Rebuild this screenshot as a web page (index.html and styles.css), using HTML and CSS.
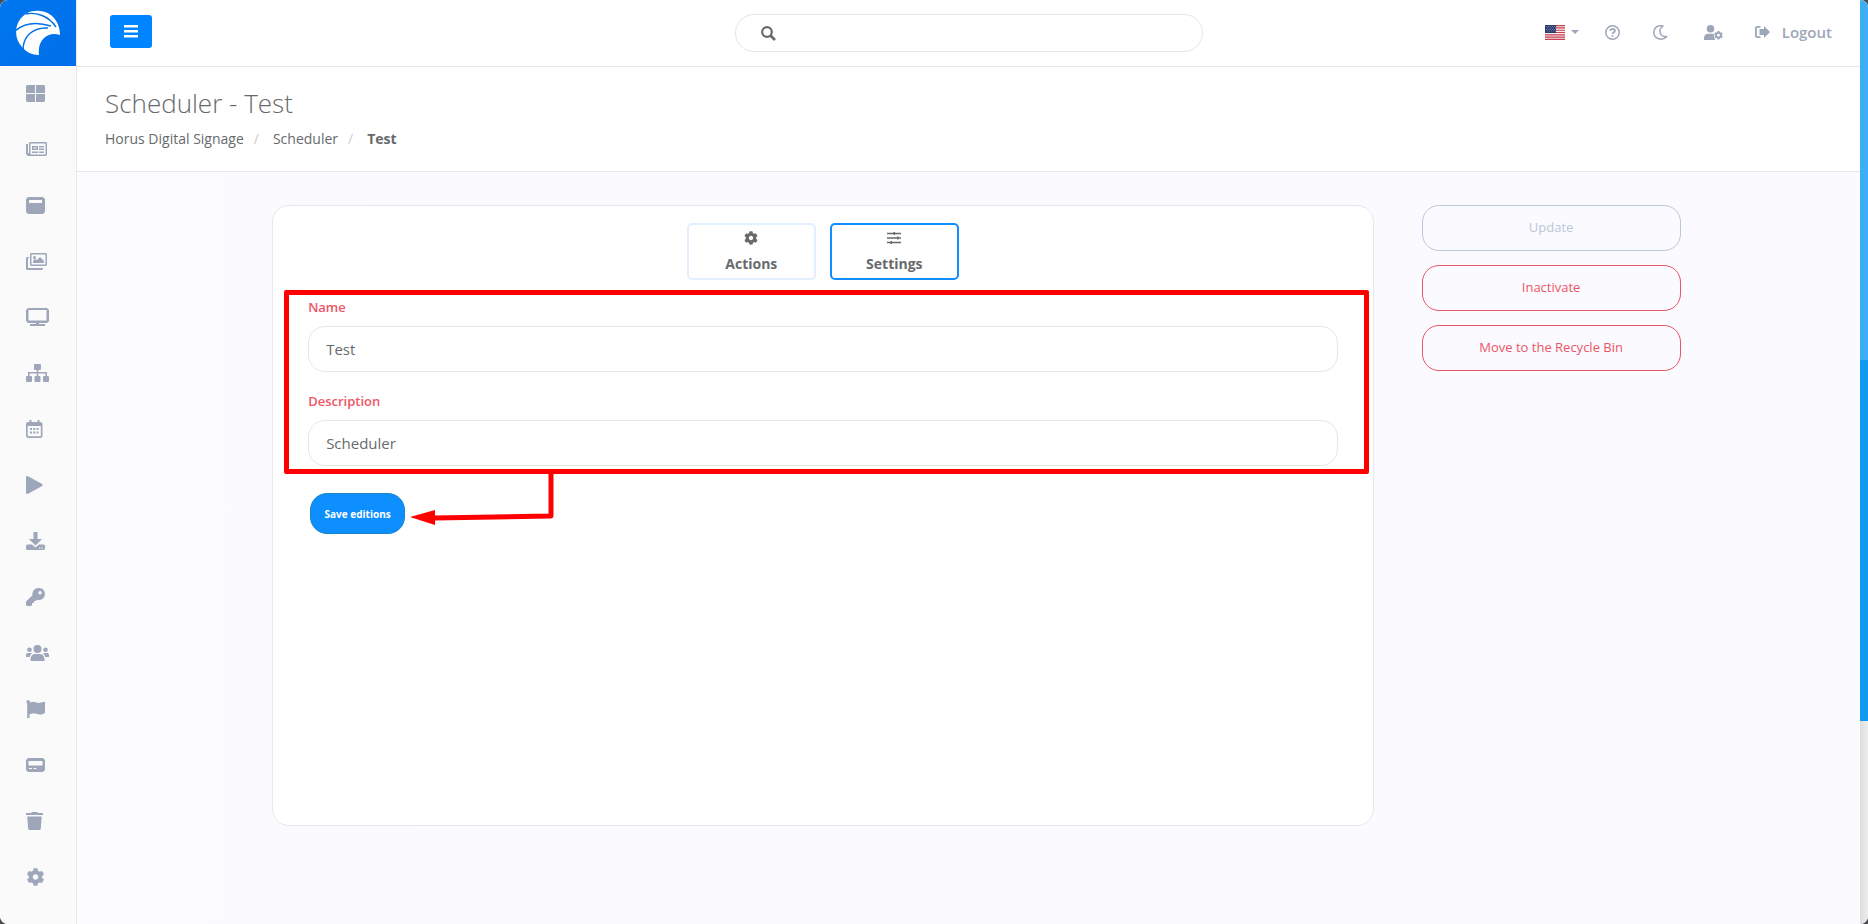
FILE: index.html
```html
<!DOCTYPE html>
<html lang="en">
<head>
  <meta charset="UTF-8">
  <meta name="viewport" content="width=device-width, initial-scale=1.0">
  <title>Scheduler - Test</title>
  <link rel="stylesheet" href="styles.css">
</head>
<body>
  <div class="app">
    <aside class="sidebar">
      <a class="logo" href="#" aria-label="Horus Digital Signage">
        <svg width="46" height="46" viewBox="0 0 46 46">
          <path fill="#fff" d="M24 45C17 45 11 42 7 37 0 29-.500 19 4 11 9 3 17 0 25 1c12 1 20 11 20 24-12-4-23 5-21 20z"/>
          <path fill="none" stroke="#0071ea" stroke-width="1.400" d="M11 4c9-2 22 1 30 13M0 21c8-7 20-10 36-5M8 40C8 27 17 17 33 18"/>
        </svg>
      </a>
      <nav class="side-menu">
        <a href="#" aria-label="Dashboard"><svg width="19" height="17" viewBox="0 0 19 17"><path d="M1 0h8v8H0V1zM10 0h8l1 1v7h-9zM0 9h9v8H1l-1-1zM10 9h9v7l-1 1h-8z"/></svg></a>
        <a href="#" aria-label="News"><svg width="21" height="14" viewBox="0 0 21 14"><path fill-rule="evenodd" d="M4 0h16l1 1v12l-1 1H2l-2-2V2h2v9h1V1zM4.500 1.500v11h15v-11zM6 4h6v4H6zm1.500 1.500v1h3v-1zM13 4h5v1.500h-5zM13 6.500h5V8h-5zM6 9.500h6V11H6zM13 9.500h5V11h-5z"/></svg></a>
        <a href="#" aria-label="Layouts"><svg width="19" height="17" viewBox="0 0 19 17"><path fill-rule="evenodd" d="M2 0h15l2 2v13l-2 2H2l-2-2V2zM3 3v3h13V3z"/></svg></a>
        <a href="#" aria-label="Media"><svg width="21" height="17" viewBox="0 0 21 17"><path fill-rule="evenodd" d="M5 0h15l1 1v11l-1 1H5l-1-1V1zM5.500 1.500v10h14v-10zM0 5l1-1h2v1H2v10h15v1l-1 1H1l-1-1zM7 10V8l2-2 2 1 3-3 4 4v2z"/><circle cx="8.500" cy="4.500" r="1.500"/></svg></a>
        <a href="#" aria-label="Screens"><svg width="23" height="18" viewBox="0 0 23 18"><path fill-rule="evenodd" d="M2 0h19l2 2v11l-2 2h-8v1h6v2H4v-2h6v-1H2l-2-2V2zM2.500 2v10.500h18V2z"/></svg></a>
        <a href="#" aria-label="Groups"><svg width="23" height="18" viewBox="0 0 23 18"><rect x="8" width="7" height="6" rx="1"/><rect y="12" width="6" height="6" rx="1"/><rect x="8.500" y="12" width="6" height="6" rx="1"/><rect x="17" y="12" width="6" height="6" rx="1"/><path d="M10.700 6h1.600v2H21v4h-1.600V9.600h-7.100V12h-1.600V9.600H3.600V12H2V8h8.700z"/></svg></a>
        <a href="#" aria-label="Scheduler"><svg width="17" height="18" viewBox="0 0 17 18"><path fill-rule="evenodd" d="M3.500 0h2v2h6V0h2v2H15l1.500 1.500v13L15 18H1.500L0 16.500v-13L1.500 2h2zM1.700 6v10.300h13.100V6zM4 8h2v2H4zm3.200 0h2v2h-2zm3.300 0h2v2h-2zM4 11.500h2v2H4zm3.200 0h2v2h-2zm3.300 0h2v2h-2z"/></svg></a>
        <a href="#" aria-label="Playback"><svg width="17" height="18" viewBox="0 0 17 18"><path d="M0 1.500C0 .2 1-.3 2 .3l13.800 7.500c1 .6 1 1.800 0 2.400L2 17.700c-1 .6-2 .1-2-1.200z"/></svg></a>
        <a href="#" aria-label="Downloads"><svg width="19" height="18" viewBox="0 0 19 18"><path fill-rule="evenodd" d="M7.500 0h4v7H16l-6.500 6.500L3 7h4.500zM1 12.500h5l3.500 3 3.500-3h5l1 1V17l-1 1H1l-1-1v-3.500zM13 15.500v1h1.300v-1zm2.500 0v1h1.300v-1z"/></svg></a>
        <a href="#" aria-label="Licenses"><svg width="19" height="18" viewBox="0 0 19 18"><path fill-rule="evenodd" d="M12.500 0A6 6 0 0 1 19 6a6 6 0 0 1-8 5.700L9.500 13H8v2H6v2l-1 1H1l-1-1v-3.500l6.500-6.300A6 6 0 0 1 12.500 0zM14 3a1.700 1.700 0 1 0 .1 0z"/></svg></a>
        <a href="#" aria-label="Users"><svg width="23" height="16" viewBox="0 0 23 16"><circle cx="11.500" cy="4" r="4"/><circle cx="3.500" cy="4.800" r="2.300"/><circle cx="19.500" cy="4.800" r="2.300"/><path d="M4.500 16v-2c0-3 2-5 4.500-5h5c2.500 0 4.500 2 4.500 5v2zM0 12v-2c0-1.200 1-2 2-2h3l1 .6C4.500 9.500 4 11 3.800 12zM23 12v-2c0-1.200-1-2-2-2h-3l-1 .6c1.500.9 2 2.400 2.200 3.400z"/></svg></a>
        <a href="#" aria-label="Reports"><svg width="19" height="18" viewBox="0 0 19 18"><path d="M2 0a2 2 0 0 1 1.800 2.500c4-2 6.500 1 10 .3 1.700-.2 3-.9 4-1.100.7-.1 1.200.3 1.200 1v10c-5 4-9 0-12.500.7-1 .1-2 .5-2.900.8V18H1.200V3.600A2 2 0 0 1 2 0z"/></svg></a>
        <a href="#" aria-label="Devices"><svg width="19" height="14" viewBox="0 0 19 14"><path fill-rule="evenodd" d="M2 0h15l2 2v10l-2 2H2l-2-2V2zM2.500 3v4.500h14V3zM3 10v1h3v-1zm4.500 0v1h3v-1z"/></svg></a>
        <a href="#" aria-label="Recycle bin"><svg width="17" height="18" viewBox="0 0 17 18"><path d="M0 1h5l1-1h5l1 1h5v2H0zM1.200 4.500h14.500L14.800 17l-1 1H3.200l-1-1z"/></svg></a>
        <a href="#" aria-label="Settings"><svg width="19" height="18" viewBox="0 0 512 512"><use href="#gear"/></svg></a>
      </nav>
    </aside>

    <div class="page">
      <header class="topbar">
        <button class="menu-toggle" type="button" aria-label="Toggle menu">
          <svg width="14" height="13" viewBox="0 0 14 13"><path fill="#fff" d="M0 0h14v2.500H0zM0 5h14v2.500H0zM0 10h14v2.500H0z"/></svg>
        </button>
        <label class="search">
          <svg width="15" height="15" viewBox="0 0 15 15"><circle cx="6" cy="6" r="4.800" fill="none" stroke="#676a6c" stroke-width="2.200"/><path d="M9.500 9.500l4.500 4.500" stroke="#676a6c" stroke-width="2.600"/></svg>
          <input type="search" aria-label="Search">
        </label>
        <nav class="top-links">
          <a class="language" href="#" aria-label="Language">
            <svg width="20" height="15" viewBox="0 0 20 15"><path fill="#f3e9ec" d="M0 0h20v15H0z"/><path stroke="#c8414f" stroke-width="1.150" d="M0 .6h20M0 2.900h20M0 5.200h20M0 7.500h20M0 9.800h20M0 12.100h20M0 14.400h20"/><path fill="#2b3c70" d="M0 0h11v8H0z"/><path stroke="#7f8bad" stroke-width=".8" stroke-dasharray="1 1" d="M1 1.500h10M2 3h9M1 4.500h10M2 6h9"/></svg>
            <svg width="8" height="4" viewBox="0 0 8 4"><path d="M0 0h8L4 4z"/></svg>
          </a>
          <a class="help" href="#" aria-label="Help"><svg width="15" height="15" viewBox="0 0 15 15"><g fill="none" stroke="#9ea6b9" stroke-width="1.500"><circle cx="7.500" cy="7.500" r="6.700"/><path stroke-width="1.800" d="M5.300 6c0-3 4.600-2.700 4.600-.2 0 1.600-2.300 1.500-2.300 3.200"/></g><circle cx="7.500" cy="10.900" r="1"/></svg></a>
          <a class="theme" href="#" aria-label="Dark mode"><svg width="15" height="15" viewBox="0 0 15 15"><path fill="none" stroke="#9ea6b9" stroke-width="1.500" stroke-linejoin="round" d="M10 1C3.500-.5.700 4 .8 7.500c.2 6.500 8.700 9 13 4C7 12.500 4.500 5 10 1z"/></svg></a>
          <a class="account" href="#" aria-label="Account"><svg width="19" height="15" viewBox="0 0 19 15"><circle cx="6.500" cy="3.800" r="3.800"/><path d="M0 15v-2c0-2.600 1.800-4.200 4-4.200h5l1.200.3-.4 3 1.500 2.900z"/><svg x="10" y="5.500" width="9" height="9.500" viewBox="0 0 512 512"><use href="#gear"/></svg></svg></a>
          <a class="logout" href="#"><svg width="15" height="12" viewBox="0 0 15 12"><path d="M5.500 0v1.800H2.600c-.5 0-.8.300-.8.800v6.800c0 .5.300.8.800.8h2.900V12H2.200C.8 12 0 11 0 9.800V2.200C0 1 .8 0 2.200 0zM9 0l6 6-6 6V9H4.500V3H9z"/></svg>Logout</a>
        </nav>
      </header>

      <section class="heading">
        <h1>Scheduler - Test</h1>
        <ol class="breadcrumb">
          <li><a href="#">Horus Digital Signage</a></li>
          <li><a href="#">Scheduler</a></li>
          <li><strong>Test</strong></li>
        </ol>
      </section>

      <main class="content">
        <section class="card">
          <div class="tabs">
            <button class="tab" type="button"><svg width="16" height="14" viewBox="0 0 512 512"><use href="#gear"/></svg>Actions</button>
            <button class="tab active" type="button"><svg width="14" height="14" viewBox="0 0 14 14"><path d="M0 1.800h14v1.400H0zM0 6.300h14v1.400H0zM0 10.800h14v1.400H0zM6.500 1H8v3H6.500zM10 5.500h1.500v3H10zM3.500 10H5v3H3.500z"/></svg>Settings</button>
          </div>
          <form class="edit-form">
            <div class="field">
              <label for="name">Name</label>
              <input id="name" type="text" value="Test">
            </div>
            <div class="field">
              <label for="description">Description</label>
              <input id="description" type="text" value="Scheduler">
            </div>
            <div class="marker"></div>
            <button class="save" type="button">Save editions</button>
            <svg class="marker-arrow" width="144" height="52" viewBox="0 0 144 52"><path fill="none" stroke="#f00" stroke-width="5" stroke-linejoin="round" d="M141 0v43L24 45"/><path fill="#f00" d="M0 44l25-7v15z"/></svg>
          </form>
        </section>
        <div class="actions">
          <button class="muted" type="button">Update</button>
          <button type="button">Inactivate</button>
          <button type="button">Move to the Recycle Bin</button>
        </div>
      </main>
    </div>
    <div class="scroll-track"><div class="scroll-upper"></div><div class="scroll-lower"></div></div>
  </div>

  <svg class="defs" width="0" height="0">
    <symbol id="gear" viewBox="0 0 512 512"><path d="M487.400 315.700l-42.600-24.600c4.300-23.200 4.300-47 0-70.200l42.600-24.600c4.900-2.800 7.100-8.600 5.500-14-11.100-35.600-30-67.800-54.700-94.600-3.800-4.100-10-5.100-14.800-2.300L380.800 110c-17.900-15.400-38.500-27.300-60.800-35.100V25.800c0-5.600-3.900-10.500-9.400-11.700-36.700-8.200-74.300-7.800-109.200 0-5.500 1.200-9.400 6.100-9.400 11.700V75c-22.200 7.900-42.800 19.800-60.800 35.100L88.700 85.500c-4.900-2.800-11-1.900-14.800 2.300-24.700 26.700-43.600 58.900-54.700 94.600-1.700 5.400.6 11.200 5.500 14L67.300 221c-4.300 23.200-4.300 47 0 70.200l-42.600 24.600c-4.900 2.800-7.100 8.600-5.500 14 11.100 35.600 30 67.800 54.700 94.600 3.800 4.100 10 5.100 14.800 2.300l42.600-24.600c17.900 15.400 38.500 27.300 60.800 35.100v49.200c0 5.600 3.900 10.500 9.400 11.700 36.700 8.200 74.300 7.800 109.200 0 5.500-1.200 9.400-6.100 9.400-11.700v-49.200c22.200-7.900 42.800-19.800 60.800-35.100l42.600 24.600c4.900 2.800 11 1.900 14.800-2.300 24.700-26.700 43.600-58.900 54.700-94.600 1.500-5.500-.7-11.300-5.600-14.100zM256 336c-44.100 0-80-35.900-80-80s35.900-80 80-80 80 35.900 80 80-35.900 80-80 80z"/></symbol>
  </svg>
</body>
</html>
```
FILE: styles.css
```css
* {
  box-sizing: border-box;
}

body {
  margin: 0;
  background: #4a4a4f;
  color: #676a6c;
  font-family: "Open Sans", "Liberation Sans", sans-serif;
  font-size: 13px;
}

a {
  color: inherit;
  text-decoration: none;
}

button,
input {
  font-family: inherit;
  color: inherit;
}

svg {
  display: block;
  fill: currentColor;
}

.defs {
  position: absolute;
}

.app {
  display: flex;
  min-height: 100vh;
  overflow: hidden;
  border-radius: 8px;
  background: #fff;
}

/* Sidebar */
.sidebar {
  flex: none;
  width: 77px;
  border-right: 1px solid #e7eaec;
  background: #fafafa;
}

.logo {
  display: flex;
  align-items: center;
  justify-content: center;
  width: 76px;
  height: 66px;
  background: linear-gradient(135deg, #0078f0, #006ee8);
}

.side-menu a {
  display: flex;
  align-items: center;
  height: 56px;
  padding: 0 0 2px 26px;
  color: #9ea6b9;
}

/* Top bar */
.page {
  display: flex;
  flex: 1;
  flex-direction: column;
  min-width: 0;
}

.topbar {
  display: grid;
  grid-template-columns: 1fr 468px 1fr;
  align-items: center;
  height: 67px;
  padding: 0 28px;
  border-bottom: 1px solid #e7e7e9;
}

.menu-toggle {
  display: flex;
  align-items: center;
  justify-content: center;
  width: 42px;
  height: 33px;
  margin: 0 0 3px 5px;
  border: 0;
  border-radius: 3px;
  background: #0084ff;
}

.search {
  display: flex;
  align-items: center;
  gap: 8px;
  height: 38px;
  padding: 0 25px;
  border: 1px solid #e5e6e7;
  border-radius: 19px;
}

.search input {
  flex: 1;
  border: 0;
  outline: 0;
  background: none;
  font-size: 14px;
}

.top-links {
  display: flex;
  align-items: center;
  justify-content: flex-end;
  padding-bottom: 2px;
  color: #9ea6b9;
  font-size: 15px;
  font-weight: 600;
}

.language {
  display: flex;
  align-items: center;
  gap: 6px;
  margin-right: 26px;
}

.theme {
  margin: 0 36px 0 33px;
}

.account {
  margin-right: 32px;
}

.logout {
  display: flex;
  align-items: center;
  gap: 12px;
}

/* Page heading */
.heading {
  height: 105px;
  padding: 18px 28px 0;
  border-bottom: 1px solid #e7e7ec;
}

.heading h1 {
  margin: 0;
  font-size: 26px;
  font-weight: 300;
  line-height: 36px;
}

.breadcrumb {
  display: flex;
  margin: 8px 0 0;
  padding: 0;
  list-style: none;
  font-size: 14px;
  line-height: 20px;
}

.breadcrumb li + li::before {
  content: "/";
  padding: 0 14px 0 10px;
  color: #ccc;
}

/* Content */
.content {
  display: grid;
  flex: 1;
  grid-template-columns: 17fr 4fr;
  gap: 48px;
  align-items: start;
  padding: 33px calc(10% + 1px) 32px calc(11% - 1px);
  background: linear-gradient(90deg, #fcfcfe, #fafaff 20%);
}

.card {
  min-height: 621px;
  padding: 17px 35px;
  border: 1px solid #e7e7ec;
  border-radius: 17px;
  background: #fff;
}

.tabs {
  display: flex;
  justify-content: center;
  gap: 14px;
}

.tab {
  display: flex;
  flex-direction: column;
  align-items: center;
  justify-content: space-between;
  width: 129px;
  height: 57px;
  padding: 6px 0 4px;
  border: 2px solid #e3efff;
  border-radius: 5px;
  background: #fff;
  font-size: 14px;
  font-weight: 700;
  line-height: 20px;
}

.tab.active {
  border-color: #118dff;
}

.edit-form {
  position: relative;
  padding-top: 17px;
}

.field {
  margin-bottom: 19px;
}

.field label {
  display: block;
  margin-bottom: 9px;
  color: #ed5565;
  font-weight: 600;
  line-height: 20px;
}

.field input {
  display: block;
  width: 100%;
  height: 46px;
  padding: 0 17px 1px;
  border: 1px solid #e5e6e7;
  border-radius: 17px;
  background: #fff;
  font-size: 15px;
}

.save {
  display: block;
  width: 95px;
  height: 41px;
  margin: 27px 0 0 2px;
  padding: 0;
  border: 1px solid #1c84c6;
  border-radius: 17px;
  background: #0e8fff;
  color: #fff;
  font-size: 10px;
  font-weight: 700;
}

/* Red highlight over the form */
.marker {
  position: absolute;
  top: 10px;
  right: -31px;
  left: -24px;
  height: 184px;
  border: 5px solid #f00;
  border-radius: 2px;
  pointer-events: none;
}

.marker-arrow {
  position: absolute;
  top: 193px;
  left: 102px;
}

/* Side actions */
.actions {
  display: grid;
  gap: 14px;
}

.actions button {
  height: 46px;
  padding: 0 12px 2px;
  border: 1px solid #ed5565;
  border-radius: 17px;
  background: none;
  color: #ed5565;
  font-size: 13px;
}

.actions .muted {
  border-color: #b9c8d8;
  color: #b9c8d8;
}

/* Scrollbar */
.scroll-track {
  display: flex;
  flex: none;
  flex-direction: column;
  width: 8px;
  background: linear-gradient(90deg, #dcdcdc, #eee);
}

.scroll-upper {
  flex: 0 0 39%;
  background: #3caef2;
}

.scroll-lower {
  flex: 0 0 39%;
  background: #0f9bf0;
}
```
